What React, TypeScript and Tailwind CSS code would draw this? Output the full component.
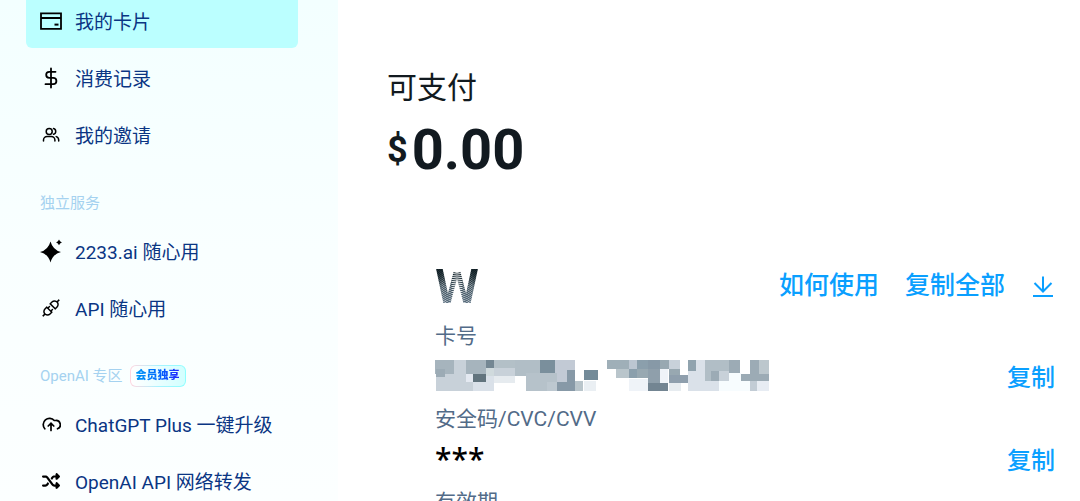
import type { ReactNode } from "react";
import { AiOutlineApi } from "react-icons/ai";
import { FaShuffle } from "react-icons/fa6";

const CardIcon = () => (
  <svg viewBox="0 0 22 18" className="h-[18px] w-[22px]" fill="none" stroke="currentColor" strokeWidth="1.8">
    <path d="M1 1.4h20v15.4H1zM1 6h20" />
    <path d="M14.5 12.6h4" strokeWidth="2" />
  </svg>
);

const DollarIcon = () => (
  <svg viewBox="0 0 22 22" className="size-[22px]" fill="none" stroke="currentColor" strokeWidth="1.8" strokeLinecap="round">
    <path d="M11 1.5v19M15.500 4.800H9.200a3 3 0 0 0 0 6h4a3.200 3.200 0 0 1 0 6.400H5.500" />
  </svg>
);

const UsersIcon = () => (
  <svg viewBox="0 0 20 20" className="size-5" fill="none" stroke="currentColor" strokeWidth="1.5" strokeLinecap="round">
    <circle cx="8.2" cy="6.4" r="3" />
    <path d="M2.5 16v-1a3.6 3.6 0 0 1 3.6-3.6h4.2a3.6 3.6 0 0 1 3.6 3.6v1M12.5 3.5a3 3 0 0 1 0 5.8M15.2 11.6a3.6 3.6 0 0 1 2.5 3.4v1" />
  </svg>
);

const SparkleIcon = () => (
  <svg viewBox="0 0 22 24" className="h-6 w-[22px]" fill="currentColor">
    <path d="M10.5 2.5Q12.800 11 21 13Q12.800 15 10.500 23.500Q8.200 15 0 13Q8.200 11 10.500 2.500Z" />
    <path d="M19 0.500Q19.700 2.700 21.900 3.400Q19.700 4.100 19 6.300Q18.300 4.100 16.100 3.400Q18.300 2.700 19 0.500Z" />
  </svg>
);

const CloudIcon = () => (
  <svg viewBox="0 0 20 20" className="size-5" fill="none" stroke="currentColor" strokeWidth="1.7" strokeLinecap="round">
    <path d="M3.800 14.800A6 6 0 1 1 13.300 6.500H14.500A4.300 4.300 0 0 1 16.500 14.800" />
    <path d="M10 16.500V9.500M7.200 12L10 9.300L12.800 12" />
  </svg>
);

const DownloadIcon = () => (
  <svg viewBox="0 0 24 24" className="size-6" fill="none" stroke="currentColor" strokeWidth="2">
    <path d="M12 2.500V17.500M3.500 9L12 17.500L20.500 9M2 22H22" />
  </svg>
);

const stripes = Array.from({ length: 26 }, (_, index) => index * 2 - 16);

// Brand mark: curved stripes showing through four slanted legs
const Logo = () => (
  <svg viewBox="0 0 44 34" className="h-[34px] w-11" fill="none" aria-label="W" role="img">
    <defs>
      <linearGradient id="ink" x1="0" y1="0" x2="0" y2="34" gradientUnits="userSpaceOnUse">
        <stop offset="0" stopColor="#0b1a20" />
        <stop offset="0.5" stopColor="#3d505b" />
        <stop offset="1" stopColor="#566b7c" />
      </linearGradient>
      <linearGradient id="shade" x1="0" y1="0" x2="0" y2="34" gradientUnits="userSpaceOnUse">
        <stop offset="0" stopColor="#0b1a20" stopOpacity="0.900" />
        <stop offset="0.500" stopColor="#0b1a20" stopOpacity="0" />
      </linearGradient>
      <mask id="legs" maskUnits="userSpaceOnUse" x="0" y="0" width="44" height="34">
        <g stroke="white" strokeWidth="6.500">
          <path d="M4 -2L12.500 38" />
          <path d="M40 -2L31.500 38" />
        </g>
        <g stroke="white" strokeWidth="5">
          <path d="M21 3.500L12.500 36" />
          <path d="M23 3.500L31.500 36" />
        </g>
      </mask>
    </defs>
    <g mask="url(#legs)">
      {stripes.map((y) => (
        <path key={y} d={`M0 ${y}Q22 ${y + 24} 44 ${y}`} stroke="url(#ink)" strokeWidth="1.200" />
      ))}
      <path d="M4 -2L12.500 38M40 -2L31.500 38" stroke="url(#shade)" strokeWidth="7" />
    </g>
  </svg>
);

type Block = [number, number, number, number, string];

const blocks: Block[] = [
  [0, 0, 19, 14, "#a6b4bd"],
  [19, 0, 12, 14, "#c8d1d9"],
  [1, 9, 9, 8, "#9cabb5"],
  [1, 17, 9, 14, "#c8d1d9"],
  [10, 14, 28, 17, "#c8d1d9"],
  [31, 0, 20, 14, "#a6b4bd"],
  [31, 14, 7, 8, "#e4e9f1"],
  [38, 14, 13, 8, "#62747e"],
  [38, 22, 21, 9, "#dae1e9"],
  [51, 0, 8, 8, "#748793"],
  [51, 8, 8, 8, "#d0dadd"],
  [51, 16, 8, 6, "#dae1e9"],
  [59, 0, 21, 8, "#b3c0c7"],
  [59, 8, 21, 8, "#c8d1d9"],
  [59, 16, 21, 7, "#e6ebef"],
  [80, 0, 25, 16, "#b1bec6"],
  [105, 0, 15, 13, "#7a8f9c"],
  [91, 13, 31, 18, "#b6c2ca"],
  [120, 0, 20, 13, "#c2cad5"],
  [112, 22, 10, 9, "#bdc8d0"],
  [122, 22, 18, 9, "#8799a7"],
  [122, 13, 10, 9, "#c2cad5"],
  [132, 10, 8, 12, "#8799a7"],
  [140, 21, 8, 10, "#b9c5cb"],
  [149, 10, 14, 10, "#748b99"],
  [149, 21, 12, 10, "#eaeff3"],
  [172, 0, 22, 9, "#9fafb8"],
  [181, 9, 13, 9, "#b9c5cb"],
  [194, 0, 8, 9, "#bcc6d1"],
  [202, 0, 11, 9, "#8b9fac"],
  [213, 0, 12, 9, "#8799a7"],
  [225, 0, 9, 9, "#98a8b1"],
  [234, 0, 11, 9, "#c8d1da"],
  [194, 9, 8, 9, "#8b9fac"],
  [202, 9, 11, 9, "#98a8b1"],
  [213, 9, 12, 14, "#8f9fab"],
  [225, 9, 8, 14, "#eff3f8"],
  [234, 9, 11, 7, "#98a8b1"],
  [234, 15, 19, 8, "#8f9fad"],
  [194, 19, 19, 12, "#eff3f8"],
  [213, 23, 20, 8, "#738592"],
  [234, 23, 12, 8, "#e7ecf0"],
  [253, 0, 8, 11, "#90a3ae"],
  [261, 0, 9, 31, "#dae1e9"],
  [253, 11, 8, 20, "#dae1e9"],
  [270, 0, 24, 21, "#b1bec6"],
  [276, 11, 8, 10, "#9cabb5"],
  [284, 11, 10, 10, "#c8d1d9"],
  [270, 21, 14, 10, "#dae1e9"],
  [294, 0, 11, 13, "#9cabb5"],
  [284, 21, 31, 10, "#f7fcfe"],
  [294, 13, 12, 18, "#f7fcfe"],
  [306, 14, 9, 7, "#9cabb5"],
  [315, 0, 9, 21, "#9cabb5"],
  [324, 0, 10, 14, "#bcc7cd"],
  [324, 14, 10, 7, "#9cabb5"],
  [315, 21, 7, 10, "#c2ccd5"],
  [322, 21, 12, 10, "#e7ecf3"],
];

const MaskedNumber = () => (
  <svg viewBox="0 0 334 31" className="h-[31px] w-[334px]" shapeRendering="crispEdges">
    {blocks.map(([x, y, width, height, fill], index) => (
      <rect key={index} x={x} y={y} width={width} height={height} fill={fill} />
    ))}
  </svg>
);

interface NavItemProps {
  icon: ReactNode;
  label: string;
  active?: boolean;
}

const NavItem = ({ icon, label, active }: NavItemProps) => (
  <li>
    <a
      href="#"
      className={
        active
          ? "flex h-[54px] items-center gap-3 rounded-md bg-[#bbffff] pl-[13px]"
          : "flex h-[54px] items-center gap-3 rounded-md pl-[13px]"
      }
    >
      <span className="flex w-6 justify-center text-black">{icon}</span>
      <span className="pt-1">{label}</span>
    </a>
  </li>
);

const NavGroup = ({ children }: { children: ReactNode }) => (
  <ul className="flex flex-col gap-[3px] text-[19px] text-[#0a3583]">{children}</ul>
);

const CopyButton = () => (
  <button type="button" className="text-2xl font-medium text-[#0a9fff]">
    复制
  </button>
);

const App = () => {
  return (
    <div className="flex h-screen overflow-hidden bg-white font-['Roboto','Noto_Sans_CJK_SC',sans-serif]">
      <aside className="w-[338px] shrink-0 bg-linear-to-b from-[#f3ffff] via-[#f9ffff] to-[#fcffff] pr-10 pl-[26px]">
        <nav className="-mt-1.5">
          <NavGroup>
            <NavItem icon={<CardIcon />} label="我的卡片" active />
            <NavItem icon={<DollarIcon />} label="消费记录" />
            <NavItem icon={<UsersIcon />} label="我的邀请" />
          </NavGroup>

          <h2 className="mt-[29px] mb-[9px] pl-3.5 text-[15px] leading-6 text-[#a5d2f0]">独立服务</h2>
          <NavGroup>
            <NavItem icon={<SparkleIcon />} label="2233.ai 随心用" />
            <NavItem icon={<AiOutlineApi className="size-[22px]" />} label="API 随心用" />
          </NavGroup>

          <h2 className="mt-[29px] mb-[9px] flex items-center gap-[7px] pl-3.5 text-[15px] leading-6 text-[#a5d2f0]">
            OpenAI 专区
            <span className="rounded-md bg-linear-to-r from-[#ffd5df] via-[#a8f3ff] to-[#8fffff] p-px">
              <span className="block rounded-[5px] bg-linear-to-r from-white to-[#d2ffff] px-[5px]">
                <span className="block bg-linear-to-r from-[#0096f5] to-[#2418ff] bg-clip-text text-[11px] leading-5 font-black text-transparent">
                  会员独享
                </span>
              </span>
            </span>
          </h2>
          <NavGroup>
            <NavItem icon={<CloudIcon />} label="ChatGPT Plus 一键升级" />
            <NavItem icon={<FaShuffle className="size-[18px]" />} label="OpenAI API 网络转发" />
          </NavGroup>
        </nav>
      </aside>

      <main className="min-w-0 flex-1 pt-[66px] pr-[25px] pl-[49px] text-[#121a20]">
        <h1 className="text-3xl leading-[44px]">可支付</h1>
        <p className="mt-2 flex items-center gap-1 font-bold">
          <span className="text-4xl">$</span>
          <span className="text-[56px] leading-[64px]">0.00</span>
        </p>

        <section className="mt-[86px] pl-12">
          <div className="flex items-center justify-between">
            <Logo />
            <div className="flex items-center gap-[26px] text-[25px] leading-9 text-[#0a9fff]">
              <a href="#" className="font-medium">
                如何使用
              </a>
              <a href="#" className="font-medium">
                复制全部
              </a>
              <button type="button" aria-label="下载">
                <DownloadIcon />
              </button>
            </div>
          </div>

          <dl className="text-[21px] text-[#526b88]">
            <dt className="mt-4 leading-8">卡号</dt>
            <dd className="flex h-[51px] items-center justify-between">
              <span className="pb-1">
                <MaskedNumber />
              </span>
              <CopyButton />
            </dd>
            <dt className="leading-8">安全码/CVC/CVV</dt>
            <dd className="flex h-[51px] items-center justify-between">
              <span className="pb-1 font-['Noto_Sans'] text-3xl font-medium text-black">***</span>
              <CopyButton />
            </dd>
            <dt className="leading-8">有效期</dt>
          </dl>
        </section>
      </main>
    </div>
  );
};

export default App;
